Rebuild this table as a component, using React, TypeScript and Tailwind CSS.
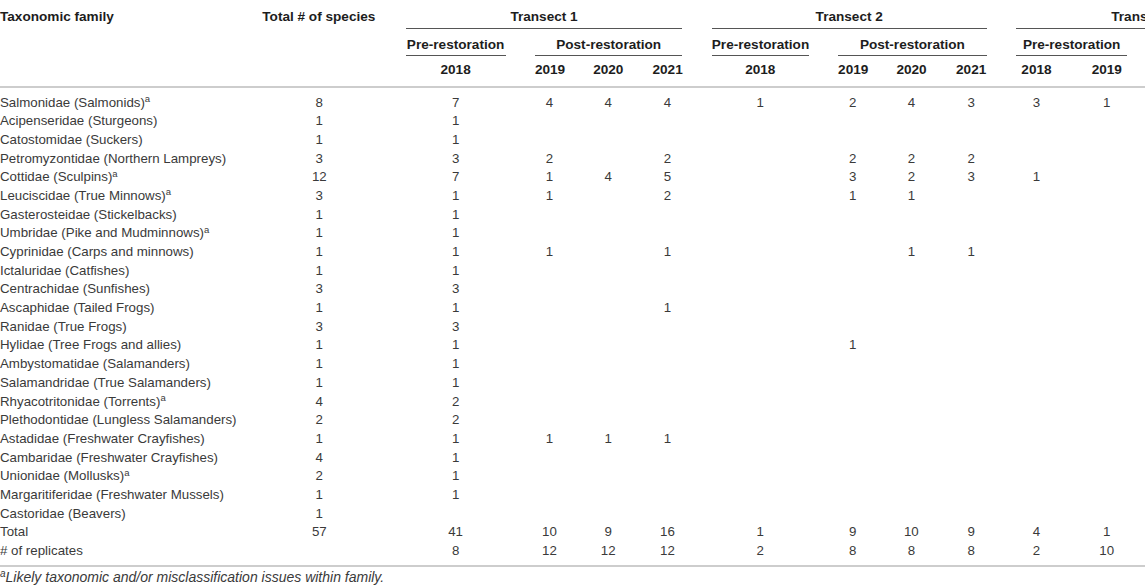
import React from "react";

type Row = { name: string; note?: boolean; vals: (number | null)[] };

const _ = null;

const rows: Row[] = [
  { name: "Salmonidae (Salmonids)", note: true, vals: [8, 7, 4, 4, 4, 1, 2, 4, 3, 3, 1] },
  { name: "Acipenseridae (Sturgeons)", vals: [1, 1] },
  { name: "Catostomidae (Suckers)", vals: [1, 1] },
  { name: "Petromyzontidae (Northern Lampreys)", vals: [3, 3, 2, _, 2, _, 2, 2, 2] },
  { name: "Cottidae (Sculpins)", note: true, vals: [12, 7, 1, 4, 5, _, 3, 2, 3, 1] },
  { name: "Leuciscidae (True Minnows)", note: true, vals: [3, 1, 1, _, 2, _, 1, 1] },
  { name: "Gasterosteidae (Stickelbacks)", vals: [1, 1] },
  { name: "Umbridae (Pike and Mudminnows)", note: true, vals: [1, 1] },
  { name: "Cyprinidae (Carps and minnows)", vals: [1, 1, 1, _, 1, _, _, 1, 1] },
  { name: "Ictaluridae (Catfishes)", vals: [1, 1] },
  { name: "Centrachidae (Sunfishes)", vals: [3, 3] },
  { name: "Ascaphidae (Tailed Frogs)", vals: [1, 1, _, _, 1] },
  { name: "Ranidae (True Frogs)", vals: [3, 3] },
  { name: "Hylidae (Tree Frogs and allies)", vals: [1, 1, _, _, _, _, 1] },
  { name: "Ambystomatidae (Salamanders)", vals: [1, 1] },
  { name: "Salamandridae (True Salamanders)", vals: [1, 1] },
  { name: "Rhyacotritonidae (Torrents)", note: true, vals: [4, 2] },
  { name: "Plethodontidae (Lungless Salamanders)", vals: [2, 2] },
  { name: "Astadidae (Freshwater Crayfishes)", vals: [1, 1, 1, 1, 1] },
  { name: "Cambaridae (Freshwater Crayfishes)", vals: [4, 1] },
  { name: "Unionidae (Mollusks)", note: true, vals: [2, 1] },
  { name: "Margaritiferidae (Freshwater Mussels)", vals: [1, 1] },
  { name: "Castoridae (Beavers)", vals: [1] },
  { name: "Total", vals: [57, 41, 10, 9, 16, 1, 9, 10, 9, 4, 1] },
  { name: "# of replicates", vals: [_, 8, 12, 12, 12, 2, 8, 8, 8, 2, 10] },
];

// total + 12 year columns (the last ones run off the right edge)
const NUM_COLS = 13;

const head = "text-[13.6px] font-bold text-[#1d1d1d] leading-[16px] whitespace-nowrap";

const Transect = ({ label }: { label: string }) => (
  <div className={`col-span-4 border-b border-[#555] pt-[9px] pb-[3px] text-center ${head}`}>{label}</div>
);

const Phase = ({ label, span }: { label: string; span: string }) => (
  <div className={`${span} border-b border-[#555] pt-[8px] pb-[2px] text-center ${head}`}>{label}</div>
);

const years = ["2018", "2019", "2020", "2021", "2018", "2019", "2020", "2021", "2018", "2019", "2020", "2021"];

export default function App() {
  return (
    <div className="w-[1145px] h-[587px] overflow-hidden bg-white font-['Liberation_Sans',Arial,sans-serif]">
      <div className="grid grid-cols-[233px_114px_100px_29px_30px_30px_97px_29px_30px_31px_41px_41px_44px_44px] gap-x-[29.3px] w-max">
        {/* header */}
        <div className={`row-span-3 pt-[9px] ${head}`}>Taxonomic family</div>
        <div className={`row-span-3 pt-[9px] ${head}`}>Total # of species</div>
        <Transect label="Transect 1" />
        <Transect label="Transect 2" />
        <Transect label="Transect 3" />

        <Phase label="Pre-restoration" span="col-span-1" />
        <Phase label="Post-restoration" span="col-span-3" />
        <Phase label="Pre-restoration" span="col-span-1" />
        <Phase label="Post-restoration" span="col-span-3" />
        <Phase label="Pre-restoration" span="col-span-2" />
        <Phase label="Post-restoration" span="col-span-2" />

        {years.map((y, i) => (
          <div key={i} className={`pt-[6px] pb-[8px] text-center ${head}`}>
            {y}
          </div>
        ))}

        <div className="col-span-full h-[2px] bg-[#cdcdcd] mb-[5.5px]" />

        {/* body */}
        {rows.map((r) => (
          <React.Fragment key={r.name}>
            <div className="leading-[18.68px] text-[13.3px] text-[#3a3a3a] whitespace-nowrap">
              {r.name}
              {r.note && <sup className="text-[9.5px]">a</sup>}
            </div>
            {Array.from({ length: NUM_COLS }).map((_, i) => (
              <div key={i} className="leading-[18.68px] text-[13.3px] text-[#3a3a3a] text-center">
                {r.vals[i] ?? ""}
              </div>
            ))}
          </React.Fragment>
        ))}

        <div className="col-span-full h-[2px] bg-[#cdcdcd] mt-[4.5px]" />
      </div>

      <p className="mt-[2px] text-[14px] leading-[17px] italic text-[#3a3a3a] whitespace-nowrap">
        <sup className="text-[10px]">a</sup>Likely taxonomic and/or misclassification issues within family.
      </p>
    </div>
  );
}
